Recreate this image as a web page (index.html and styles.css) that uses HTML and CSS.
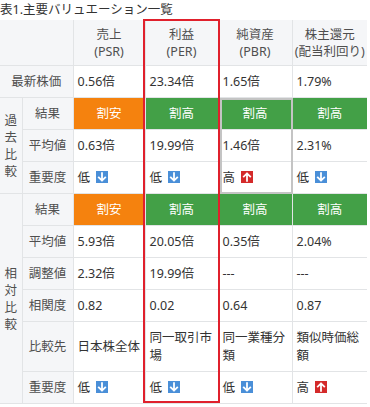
FILE: index.html
```html
<!DOCTYPE html>
<html lang="ja">
<head>
<meta charset="utf-8">
<link rel="stylesheet" href="styles.css">
</head>
<body>
<div class="title">表1.主要バリュエーション一覧</div>
<div class="wrap">
<table class="val">
<colgroup>
<col class="c-grp"><col class="c-lbl"><col class="c-psr"><col class="c-per"><col class="c-pbr"><col class="c-div">
</colgroup>
<tr class="head">
<th colspan="2"></th>
<th>売上<br>(PSR)</th>
<th>利益<br>(PER)</th>
<th>純資産<br>(PBR)</th>
<th>株主還元<br>(配当利回り)</th>
</tr>
<tr>
<th colspan="2" class="lbl">最新株価</th>
<td>0.56倍</td><td>23.34倍</td><td>1.65倍</td><td>1.79%</td>
</tr>
<tr>
<th rowspan="3" class="grp">過去比較</th>
<th class="lbl">結果</th>
<td class="res cheap">割安</td><td class="res high">割高</td><td class="res high">割高</td><td class="res high">割高</td>
</tr>
<tr>
<th class="lbl">平均値</th>
<td>0.63倍</td><td>19.99倍</td><td>1.46倍</td><td>2.31%</td>
</tr>
<tr>
<th class="lbl">重要度</th>
<td>低<span class="ic down"><svg viewBox="0 0 12 12"><path d="M6 2.2V9.4M2.8 6.4L6 9.6L9.2 6.4"/></svg></span></td>
<td>低<span class="ic down"><svg viewBox="0 0 12 12"><path d="M6 2.2V9.4M2.8 6.4L6 9.6L9.2 6.4"/></svg></span></td>
<td>高<span class="ic up"><svg viewBox="0 0 12 12"><path d="M6 9.8V2.6M2.8 5.6L6 2.4L9.2 5.6"/></svg></span></td>
<td>低<span class="ic down"><svg viewBox="0 0 12 12"><path d="M6 2.2V9.4M2.8 6.4L6 9.6L9.2 6.4"/></svg></span></td>
</tr>
<tr>
<th rowspan="6" class="grp">相対比較</th>
<th class="lbl">結果</th>
<td class="res cheap">割安</td><td class="res high">割高</td><td class="res high">割高</td><td class="res high">割高</td>
</tr>
<tr>
<th class="lbl">平均値</th>
<td>5.93倍</td><td>20.05倍</td><td>0.35倍</td><td>2.04%</td>
</tr>
<tr>
<th class="lbl">調整値</th>
<td>2.32倍</td><td>19.99倍</td><td>---</td><td>---</td>
</tr>
<tr>
<th class="lbl">相関度</th>
<td>0.82</td><td>0.02</td><td>0.64</td><td>0.87</td>
</tr>
<tr>
<th class="lbl">比較先</th>
<td>日本株全体</td><td>同一取引市場</td><td>同一業種分類</td><td>類似時価総額</td>
</tr>
<tr>
<th class="lbl">重要度</th>
<td>低<span class="ic down"><svg viewBox="0 0 12 12"><path d="M6 2.2V9.4M2.8 6.4L6 9.6L9.2 6.4"/></svg></span></td>
<td>低<span class="ic down"><svg viewBox="0 0 12 12"><path d="M6 2.2V9.4M2.8 6.4L6 9.6L9.2 6.4"/></svg></span></td>
<td>低<span class="ic down"><svg viewBox="0 0 12 12"><path d="M6 2.2V9.4M2.8 6.4L6 9.6L9.2 6.4"/></svg></span></td>
<td>高<span class="ic up"><svg viewBox="0 0 12 12"><path d="M6 9.8V2.6M2.8 5.6L6 2.4L9.2 5.6"/></svg></span></td>
</tr>
</table>
<div class="mark-red"></div>
<div class="mark-gray"></div>
</div>
</body>
</html>
```
FILE: styles.css
```css
html, body {
  margin: 0;
  padding: 0;
  background: #fff;
}
body {
  font-family: "Noto Sans", "Noto Sans CJK JP", sans-serif;
  font-size: 12.5px;
  color: #333;
}
.title {
  height: 20px;
  line-height: 20px;
  color: #333;
}
.wrap {
  position: relative;
  width: 367px;
}
.val {
  width: 367px;
  table-layout: fixed;
  border-collapse: collapse;
}
.c-grp { width: 22px; }
.c-lbl { width: 51px; }
.c-psr { width: 72px; }
.c-per { width: 73px; }
.c-pbr { width: 74px; }
.c-div { width: 75px; }
.val th, .val td {
  border: 1px solid #e2e4e6;
  padding: 6.5px 4px;
  line-height: 18px;
  vertical-align: middle;
}
.val tr > :first-child { border-left: none; }
.val tr > :last-child { border-right: none; }
.val th {
  background: #f5f6f8;
  color: #4f4f4f;
  font-weight: normal;
  text-align: center;
}
.val .head th {
  line-height: 17px;
  padding: 5.5px 1px;
  border-top: none;
}
.val td {
  text-align: left;
  color: #333;
  background: #fff;
}
.val .grp {
  padding: 0 4px;
  line-height: 17px;
  word-break: break-all;
}
.val td.res {
  text-align: center;
  color: #fff;
}
.val td.cheap { background: #f5820e; }
.val td.high { background: #43a047; }
.ic {
  display: inline-block;
  width: 12px;
  height: 12px;
  margin-left: 6px;
  vertical-align: -1px;
}
.ic svg {
  display: block;
  width: 12px;
  height: 12px;
}
.ic path {
  fill: none;
  stroke: #fff;
  stroke-width: 1.8;
  stroke-linecap: square;
}
.ic.down { background: #4a8fd8; }
.ic.up { background: #d42a2a; }
.mark-red {
  position: absolute;
  left: 143px;
  top: -1px;
  width: 77px;
  height: 384px;
  border: 2px solid #e0202c;
  box-sizing: border-box;
}
.mark-gray {
  position: absolute;
  left: 220px;
  top: 78px;
  width: 73px;
  height: 96px;
  border: 2px solid #c4c4c4;
  box-sizing: border-box;
}
```
